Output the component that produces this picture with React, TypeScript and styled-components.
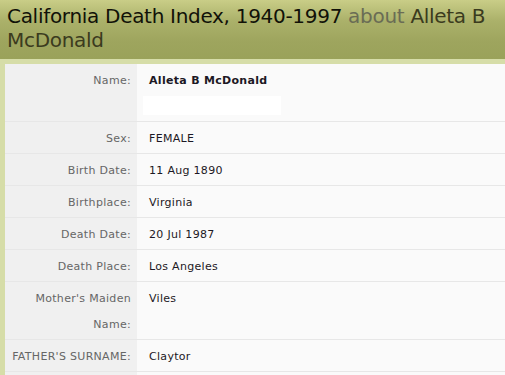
import React from "react";
import styled, { createGlobalStyle } from "styled-components";

const Global = createGlobalStyle`
  html, body { margin: 0; padding: 0; background: #d6dda8; }
  body { font-family: "DejaVu Sans", Verdana, sans-serif; }
`;

const Page = styled.div`
  width: 505px;
  height: 375px;
  overflow: hidden;
  background: #d6dda8;
`;

const Header = styled.h1`
  margin: 0;
  padding: 4px 7px 7px 7px;
  height: 48px;
  font-family: "DejaVu Sans", Verdana, sans-serif;
  font-weight: normal;
  font-size: 20px;
  line-height: 24px;
  letter-spacing: -0.3px;
  color: #111108;
  background: linear-gradient(to bottom, #c9cd87 0%, #abb16a 35%, #9ea55e 70%, #9aa25a 100%);
`;

const About = styled.span`
  color: #6a6c55;
`;

const Subject = styled.span`
  color: #3b3b1e;
`;

const Body = styled.div`
  margin-top: 5px;
  margin-left: 5px;
  background: #fafafa;
`;

const Row = styled.div`
  display: grid;
  grid-template-columns: 132px 1fr;
  border-bottom: 1px solid #e7e7e7;
`;

const Label = styled.div`
  background: #f0f0f0;
  color: #666;
  text-align: right;
  padding: 4px 6px 1px 0;
  font-size: 11px;
  line-height: 26px;
  letter-spacing: 0.3px;
`;

const Value = styled.div<{ $bold?: boolean }>`
  color: #1c1824;
  padding: 4px 0 1px 12px;
  font-size: 11px;
  line-height: 26px;
  letter-spacing: 0.3px;
  font-weight: ${(p) => (p.$bold ? "bold" : "normal")};
`;

const Blank = styled.div`
  width: 138px;
  height: 19px;
  margin: 2px 0 5px -6px;
  background: #ffffff;
`;

const IconCell = styled.div`
  background: #f0f0f0;
  height: 20px;
  padding-left: 32px;
`;

const rows: [string, string][] = [
  ["Sex:", "FEMALE"],
  ["Birth Date:", "11 Aug 1890"],
  ["Birthplace:", "Virginia"],
  ["Death Date:", "20 Jul 1987"],
  ["Death Place:", "Los Angeles"],
  ["Mother's Maiden Name:", "Viles"],
  ["FATHER'S SURNAME:", "Claytor"],
];

export default function App() {
  return (
    <Page>
      <Global />
      <Header>
        California Death Index, 1940-1997 <About>about</About>{" "}
        <Subject>Alleta B McDonald</Subject>
      </Header>
      <Body>
        <Row>
          <Label>Name:</Label>
          <Value $bold>
            Alleta B McDonald
            <Blank />
          </Value>
        </Row>
        {rows.map(([l, v]) => (
          <Row key={l}>
            <Label>{l === "Mother's Maiden Name:" ? <>Mother's Maiden<br />Name:</> : l}</Label>
            <Value>{v}</Value>
          </Row>
        ))}
        <Row>
          <IconCell>
            <svg width="14" height="10" viewBox="0 0 14 10">
              <path d="M1 9 L7 2 L13 9" fill="#fbf6dc" stroke="#e2c566" strokeWidth="1.3" />
            </svg>
          </IconCell>
          <Value />
        </Row>
      </Body>
    </Page>
  );
}
